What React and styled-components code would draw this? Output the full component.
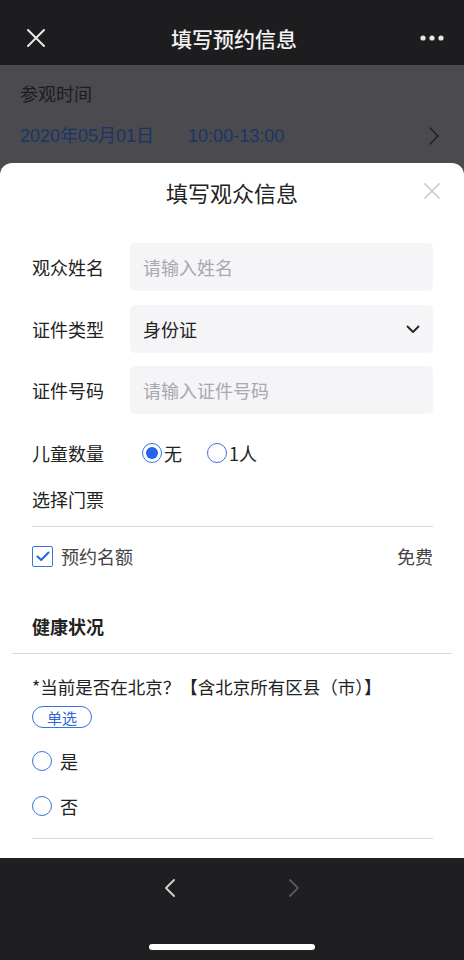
import React from 'react'
import styled, { createGlobalStyle } from 'styled-components'

const GlobalStyle = createGlobalStyle`
  * { box-sizing: border-box; }
  body {
    margin: 0;
    font-family: 'Noto Sans CJK SC', 'Noto Sans', sans-serif;
    background: #1f1e21;
  }
`

const Screen = styled.div`
  width: 464px;
  height: 960px;
  display: flex;
  flex-direction: column;
  overflow: hidden;
`

const NavBar = styled.header`
  height: 65px;
  flex-shrink: 0;
  background: #1d1c1f;
  display: flex;
  align-items: center;
  justify-content: space-between;
  padding: 10px 20px 0 24px;
`

const NavTitle = styled.h1`
  margin: 0;
  font-size: 21px;
  font-weight: 500;
  color: #f2f2f2;
`

const IconButton = styled.div`
  width: 24px;
  height: 24px;
  display: flex;
  align-items: center;
  justify-content: center;
`

const Backdrop = styled.div`
  flex: 1;
  display: flex;
  flex-direction: column;
  background: #4b4a4e;
  min-height: 0;
`

const Info = styled.div`
  height: 98px;
  flex-shrink: 0;
  padding: 14px 24px 0 20px;
`

const InfoLabel = styled.div`
  font-size: 18px;
  line-height: 28px;
  color: #1c1c1e;
`

const InfoValue = styled.div`
  margin-top: 15px;
  display: flex;
  align-items: center;
  font-family: 'Liberation Sans', 'Noto Sans CJK SC', sans-serif;
  font-size: 18px;
  line-height: 28px;
  color: #1a3566;
  span + span { margin-left: 34px; }
`

const Chevron = styled.div`
  margin-left: auto;
  display: flex;
`

const Sheet = styled.section`
  flex: 1;
  min-height: 0;
  background: #fff;
  border-radius: 12px 12px 0 0;
  overflow: hidden;
  display: flex;
  flex-direction: column;
`

const SheetHead = styled.div`
  position: relative;
  height: 58px;
  padding-top: 15px;
  text-align: center;
  font-size: 22px;
  line-height: 28px;
  color: #222;
`

const SheetClose = styled.div`
  position: absolute;
  right: 23px;
  top: 19px;
  display: flex;
`

const Form = styled.div`
  padding: 22px 31px 0 32px;
`

const FieldRow = styled.div`
  display: flex;
  align-items: center;
  margin-bottom: ${(p) => p.$gap || 0}px;
`

const Label = styled.div`
  width: 98px;
  flex-shrink: 0;
  font-size: 18px;
  color: #222;
`

const InputBox = styled.div`
  flex: 1;
  height: 48px;
  background: #f5f4f7;
  border-radius: 5px;
  padding: 0 13px;
  display: flex;
  align-items: center;
  justify-content: space-between;
  font-size: 18px;
  color: ${(p) => (p.$placeholder ? '#a8a8ad' : '#222')};
`

const ChoiceRow = styled.div`
  display: flex;
  align-items: center;
  height: 42px;
  margin-top: 18px;
`

const RadioGroup = styled.div`
  display: flex;
  align-items: center;
  padding-left: 12px;
  gap: 25px;
`

const RadioItem = styled.label`
  display: flex;
  align-items: center;
  gap: ${(p) => p.$gap || 2}px;
  font-size: 18px;
  color: #222;
`

const RadioCircle = styled.span`
  width: 20px;
  height: 20px;
  border-radius: 50%;
  border: 1.5px solid #3a72e0;
  display: flex;
  align-items: center;
  justify-content: center;
  &::after {
    content: '';
    width: 12px;
    height: 12px;
    border-radius: 50%;
    background: ${(p) => (p.$checked ? '#2563eb' : 'transparent')};
  }
`

const PlainRow = styled.div`
  height: 50px;
  display: flex;
  align-items: center;
  font-size: 18px;
  color: #222;
`

const Divider = styled.div`
  height: 1px;
  background: #d9d9dc;
  margin: ${(p) => p.$margin || '0'};
`

const TicketRow = styled.div`
  height: 58px;
  display: flex;
  align-items: center;
  justify-content: space-between;
  font-size: 18px;
  color: #444;
`

const CheckLabel = styled.div`
  display: flex;
  align-items: center;
  gap: 8px;
`

const CheckBox = styled.span`
  width: 21px;
  height: 21px;
  border: 1.5px solid #3a72e0;
  border-radius: 2px;
  display: flex;
  align-items: center;
  justify-content: center;
`

const SectionTitle = styled.div`
  padding: 27px 32px 13px;
  font-size: 18px;
  line-height: 28px;
  font-weight: 700;
  color: #222;
`

const Question = styled.div`
  padding: 19px 31px 0 32px;
`

const QuestionText = styled.div`
  font-size: 17.5px;
  line-height: 28px;
  color: #222;
  white-space: nowrap;
`

const Tag = styled.span`
  display: inline-flex;
  align-items: center;
  justify-content: center;
  margin-top: 5px;
  width: 60px;
  height: 22px;
  border: 1.5px solid #3a72e0;
  border-radius: 11px;
  font-size: 15px;
  color: #2f66d6;
`

const Options = styled.div`
  margin-top: 10px;
`

const OptionRow = styled.div`
  height: 45px;
  display: flex;
  align-items: center;
`

const Toolbar = styled.footer`
  height: 102px;
  flex-shrink: 0;
  background: #1f1e21;
  display: flex;
  flex-direction: column;
  align-items: center;
`

const ToolNav = styled.div`
  height: 60px;
  display: flex;
  align-items: center;
  gap: 112px;
`

const HomeBar = styled.div`
  margin-top: 26px;
  width: 166px;
  height: 6px;
  border-radius: 3px;
  background: #fff;
`

const CrossIcon = ({ size, color, width = 2 }) => (
  <svg width={size} height={size} viewBox="0 0 20 20">
    <path d="M2 2 L18 18 M18 2 L2 18" stroke={color} strokeWidth={width} strokeLinecap="round" />
  </svg>
)

const ArrowIcon = ({ dir = 'right', color, w = 12, h = 20, width = 1.6 }) => (
  <svg width={w} height={h} viewBox="0 0 12 20">
    <path
      d={dir === 'right' ? 'M2 2 L10 10 L2 18' : 'M10 2 L2 10 L10 18'}
      fill="none"
      stroke={color}
      strokeWidth={width}
      strokeLinecap="round"
      strokeLinejoin="round"
    />
  </svg>
)

const App = () => {
  return (
    <Screen>
      <GlobalStyle />
      <NavBar>
        <IconButton>
          <CrossIcon size={20} color="#e8e8e8" />
        </IconButton>
        <NavTitle>填写预约信息</NavTitle>
        <IconButton>
          <svg width="24" height="6" viewBox="0 0 24 6">
            <circle cx="3" cy="3" r="2.6" fill="#e6e6e6" />
            <circle cx="12" cy="3" r="2.6" fill="#e6e6e6" />
            <circle cx="21" cy="3" r="2.6" fill="#e6e6e6" />
          </svg>
        </IconButton>
      </NavBar>

      <Backdrop>
        <Info>
          <InfoLabel>参观时间</InfoLabel>
          <InfoValue>
            <span>2020年05月01日</span>
            <span>10:00-13:00</span>
            <Chevron>
              <ArrowIcon color="#232325" w={12} h={20} />
            </Chevron>
          </InfoValue>
        </Info>

        <Sheet>
          <SheetHead>
            填写观众信息
            <SheetClose>
              <CrossIcon size={18} color="#c9c9cc" width={1.8} />
            </SheetClose>
          </SheetHead>

          <Form>
            <FieldRow $gap={14}>
              <Label>观众姓名</Label>
              <InputBox $placeholder>请输入姓名</InputBox>
            </FieldRow>
            <FieldRow $gap={13}>
              <Label>证件类型</Label>
              <InputBox>
                身份证
                <svg width="14" height="9" viewBox="0 0 14 9">
                  <path d="M1.5 1.5 L7 7 L12.5 1.5" fill="none" stroke="#222" strokeWidth="1.8" strokeLinecap="round" strokeLinejoin="round" />
                </svg>
              </InputBox>
            </FieldRow>
            <FieldRow>
              <Label>证件号码</Label>
              <InputBox $placeholder>请输入证件号码</InputBox>
            </FieldRow>

            <ChoiceRow>
              <Label>儿童数量</Label>
              <RadioGroup>
                <RadioItem>
                  <RadioCircle $checked />无
                </RadioItem>
                <RadioItem>
                  <RadioCircle />1人
                </RadioItem>
              </RadioGroup>
            </ChoiceRow>

            <PlainRow>选择门票</PlainRow>
            <Divider $margin="2px 0 0" />
            <TicketRow>
              <CheckLabel>
                <CheckBox>
                  <svg width="14" height="11" viewBox="0 0 14 11">
                    <path d="M1.5 5.5 L5.2 9 L12.5 1.5" fill="none" stroke="#2563eb" strokeWidth="2" strokeLinecap="round" strokeLinejoin="round" />
                  </svg>
                </CheckBox>
                预约名额
              </CheckLabel>
              <span>免费</span>
            </TicketRow>
          </Form>

          <SectionTitle>健康状况</SectionTitle>
          <Divider $margin="0 12px" />

          <Question>
            <QuestionText>*当前是否在北京？【含北京所有区县（市）】</QuestionText>
            <Tag>单选</Tag>
            <Options>
              <OptionRow>
                <RadioItem $gap={8}>
                  <RadioCircle />是
                </RadioItem>
              </OptionRow>
              <OptionRow>
                <RadioItem $gap={8}>
                  <RadioCircle />否
                </RadioItem>
              </OptionRow>
            </Options>
            <Divider $margin="9px 0 0" />
          </Question>
        </Sheet>
      </Backdrop>

      <Toolbar>
        <ToolNav>
          <ArrowIcon dir="left" color="#d6d6d6" w={12} h={22} width={1.8} />
          <ArrowIcon dir="right" color="#58575b" w={12} h={22} width={1.8} />
        </ToolNav>
        <HomeBar />
      </Toolbar>
    </Screen>
  )
}

export default App
